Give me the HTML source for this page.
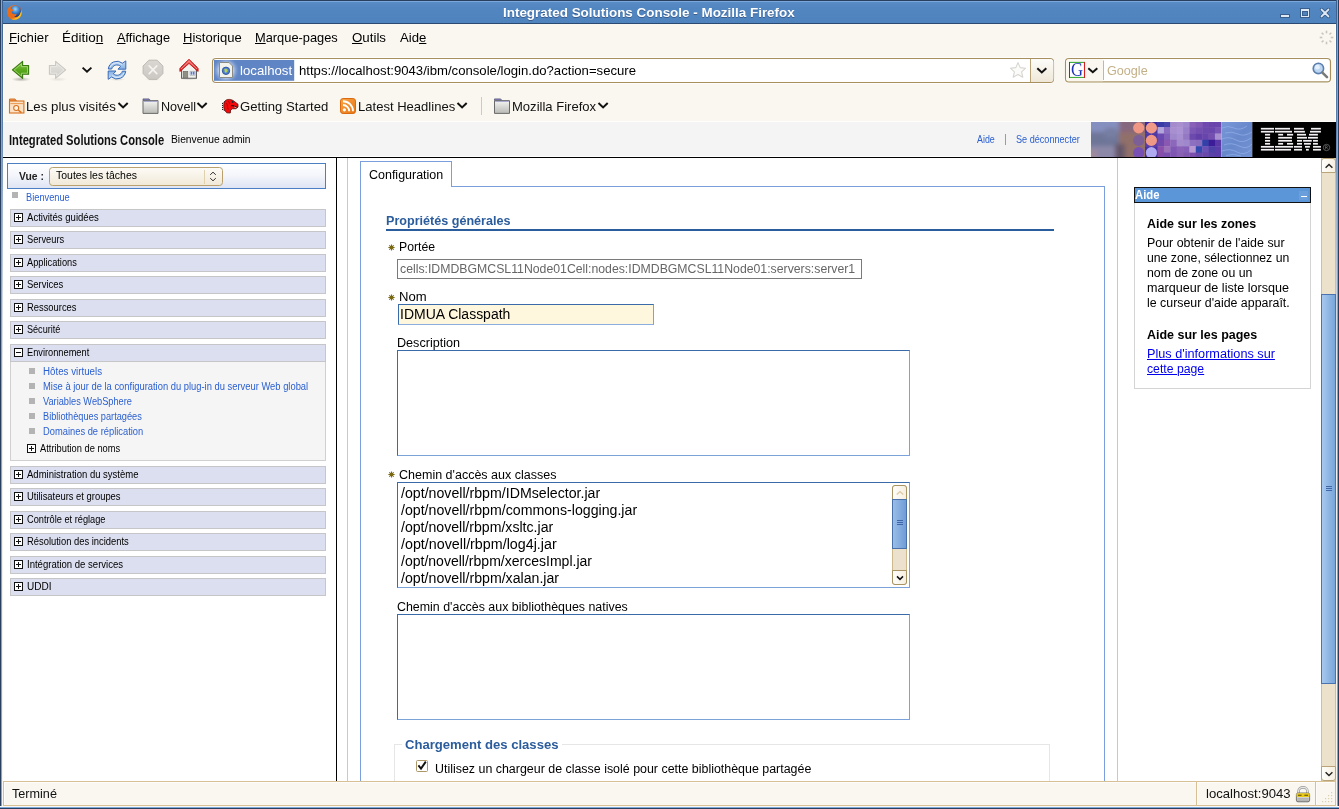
<!DOCTYPE html>
<html>
<head>
<meta charset="utf-8">
<title>Integrated Solutions Console - Mozilla Firefox</title>
<style>
*{box-sizing:border-box;margin:0;padding:0}
html,body{width:1339px;height:809px;overflow:hidden;background:#faf7f0;font-family:"Liberation Sans",sans-serif;}
.abs{position:absolute}
#win{position:absolute;left:0;top:0;width:1339px;height:809px;background:#faf7f0;overflow:hidden;will-change:transform}
.t{position:absolute;white-space:nowrap;line-height:1}
svg{position:absolute;overflow:visible}
/* title bar */
#title{position:absolute;left:0;top:0;width:1339px;height:24px;background:linear-gradient(to bottom,#2a4060 0,#2a4060 1px,#7aa8da 1px,#7aa8da 2px,#5a8cc6 2px,#5286c1 8px,#4f83be 23px,#2a4a72 23px,#2a4a72 24px)}
#title .txt{position:absolute;left:0;width:1299px;top:4px;text-align:center;color:#fff;font-weight:bold;font-size:13.5px;letter-spacing:0.45px;line-height:14px}
/* borders */
#bl{position:absolute;left:0;top:0;width:2px;height:809px;background:linear-gradient(to right,#2a4060 0,#2a4060 1px,#7aa8da 1px,#7aa8da 2px)}
#bl2{position:absolute;left:2px;top:0;width:1px;height:809px;background:linear-gradient(to bottom,#3a5f8c 0px,#4a70a0 60px,#5a7fae 125px,#9ab0cc 200px,#d0d8e4 300px,#f0eee8 400px,#faf7f0 809px)}
#hl{position:absolute;left:3px;top:24px;width:1px;height:98px;background:rgba(255,255,255,0.8)}
#br{position:absolute;left:1337px;top:0;width:2px;height:809px;background:linear-gradient(to left,#2a4060 0,#2a4060 1px,#7aa8da 1px,#7aa8da 2px)}
#br2{position:absolute;left:1336px;top:0;width:1px;height:809px;background:linear-gradient(to bottom,#3a5f8c 0px,#4a70a0 60px,#5a7fae 125px,#9ab0cc 200px,#d0d8e4 300px,#f0eee8 400px,#faf7f0 809px)}
#hr{position:absolute;left:1335px;top:24px;width:1px;height:98px;background:rgba(255,255,255,0.8)}
#bb{position:absolute;left:0;bottom:0;width:1339px;height:3px;background:linear-gradient(to top,#2a4060 0,#2a4060 1px,#7aa8da 1px,#7aa8da 2px,#fbf8f2 2px,#fbf8f2 3px)}
.menu{font-size:13px;color:#000;top:31px;letter-spacing:0.1px}
.menu u{text-decoration:underline;text-underline-offset:0.6px;text-decoration-thickness:1px}
.bm{font-size:13px;color:#111;top:100px;letter-spacing:0.2px}
.nav{font-size:10px;color:#000;left:27px;letter-spacing:0.1px}
.navbar{position:absolute;left:10px;width:316px;height:18px;background:#dcdfef;border:1px solid #c6c6c8}
.lnk{font-size:10px;color:#2a5fd0;left:43px;letter-spacing:0.1px}
.bul{position:absolute;width:6px;height:6px;background:#b4b4b4}
.lbl{font-size:12px;color:#000;letter-spacing:0.2px}
.ta{position:absolute;background:#fff;border:1px solid;border-color:#3b6aa8 #7ba3d9 #7ba3d9 #3b6aa8}
.cp{font-size:14px;color:#000;left:401px}
.hp{font-size:12px;color:#000;left:1147px;letter-spacing:0.15px}
</style>
</head>
<body>
<div id="win">
  <!-- TITLE BAR -->
  <div id="title"></div>
  <div class="t" style="left:503.13px;top:6px;font-size:13px;font-weight:bold;color:#fff;text-shadow:0 1px 0 rgba(40,60,100,0.55);letter-spacing:0;transform-origin:0 0;transform:scaleX(1.033)">Integrated Solutions Console - Mozilla Firefox</div>
  <!-- firefox icon -->
  <svg style="left:6.5px;top:4.8px" width="15" height="15" viewBox="0 0 15 15">
    <defs><radialGradient id="ffg" cx="0.5" cy="0.3" r="0.7"><stop offset="0" stop-color="#9fd8f6"/><stop offset="0.45" stop-color="#3f86d4"/><stop offset="1" stop-color="#142a6a"/></radialGradient>
    <linearGradient id="ffo" x1="0" y1="0" x2="1" y2="1"><stop offset="0" stop-color="#f0841c"/><stop offset="0.55" stop-color="#e2521a"/><stop offset="1" stop-color="#f8c822"/></linearGradient></defs>
    <circle cx="7.5" cy="7.5" r="7.3" fill="url(#ffo)"/>
    <circle cx="8.3" cy="6.4" r="5.7" fill="url(#ffg)"/>
    <path d="M0.3 6.8 C0.4 3.8 2 1.8 3.8 1.4 C3.2 2.6 3.4 3.4 4.4 4 C5.6 4.2 6.6 4.8 6.2 5.8 C5.2 6 4.4 6.8 4.8 7.8 C5.8 9.4 8 9.6 9.6 8.8 C9.4 11 7.4 12.4 5.2 12.2 C6.6 13.4 9.4 13.4 11.4 12 C9.4 14.8 5 15.2 2.4 12.8 C0.8 11.2 0.2 9 0.3 6.8 Z" fill="#ea6c18"/>
    <path d="M14.4 5.4 C15.2 8.4 14 12 11 13.8 C8.8 15 6 15 4 13.8 C7.4 14.2 10.8 12.8 12.6 9.8 C13.4 8.4 13.8 6.8 14.4 5.4 Z" fill="#f8c020"/>
  </svg>
  <!-- window controls -->
  <div class="abs" style="left:1280px;top:14px;width:10px;height:4px;background:#dfe8f5;border:1px solid #3a5f8c"></div>
  <div class="abs" style="left:1300px;top:8px;width:10px;height:10px;background:#dfe8f5;border:1px solid #3a5f8c"></div>
  <div class="abs" style="left:1302px;top:11px;width:6px;height:5px;background:#4f83be;border:1px solid #3a5f8c"></div>
  <svg style="left:1320px;top:8px" width="10" height="10" viewBox="0 0 10 10"><path d="M1.6 1.6 L8.4 8.4 M8.4 1.6 L1.6 8.4" stroke="#3a5f8c" stroke-width="3.6" fill="none" stroke-linecap="round"/><path d="M1.6 1.6 L8.4 8.4 M8.4 1.6 L1.6 8.4" stroke="#dfe8f5" stroke-width="1.9" fill="none" stroke-linecap="round"/></svg>
  <!-- throbber -->
  <svg style="left:1318.5px;top:29.5px" width="15" height="15" viewBox="-7.5 -7.5 15 15" fill="#c9c5bd">
    <rect x="-0.8" y="-6.8" width="1.6" height="2.6"/><rect x="-0.8" y="4.2" width="1.6" height="2.6"/>
    <rect x="-6.8" y="-0.8" width="2.6" height="1.6"/><rect x="4.2" y="-0.8" width="2.6" height="1.6"/>
    <rect x="-0.8" y="-6.8" width="1.6" height="2.6" transform="rotate(45)"/><rect x="-0.8" y="-6.8" width="1.6" height="2.6" transform="rotate(135)"/>
    <rect x="-0.8" y="-6.8" width="1.6" height="2.6" transform="rotate(225)"/><rect x="-0.8" y="-6.8" width="1.6" height="2.6" transform="rotate(315)"/>
  </svg>


  <!-- MENU BAR -->
  <div class="t menu" style="left:9.39px;letter-spacing:0;transform-origin:0 0;transform:scaleX(1.0146)"><u>F</u>ichier</div>
  <div class="t menu" style="left:62.37px;letter-spacing:0;transform-origin:0 0;transform:scaleX(1.0342)">Éditio<u>n</u></div>
  <div class="t menu" style="left:116.8px;letter-spacing:0;transform-origin:0 0;transform:scaleX(0.9832)"><u>A</u>ffichage</div>
  <div class="t menu" style="left:183.3px;letter-spacing:0;transform-origin:0 0;transform:scaleX(1.0018)"><u>H</u>istorique</div>
  <div class="t menu" style="left:255.11px;letter-spacing:0;transform-origin:0 0;transform:scaleX(0.9872)"><u>M</u>arque-pages</div>
  <div class="t menu" style="left:351.69px;letter-spacing:0;transform-origin:0 0;transform:scaleX(1.0233)"><u>O</u>utils</div>
  <div class="t menu" style="left:400px;letter-spacing:0;transform-origin:0 0;transform:scaleX(1.0118)">Aid<u>e</u></div>
  <!-- NAV TOOLBAR -->
  <svg style="left:0;top:52px" width="1339" height="38" viewBox="0 52 1339 38">
    <defs>
      <linearGradient id="gback" x1="0" y1="0" x2="0" y2="1"><stop offset="0" stop-color="#8fcb4c"/><stop offset="0.5" stop-color="#58a81c"/><stop offset="1" stop-color="#4a9614"/></linearGradient>
      <linearGradient id="gfwd" x1="0" y1="0" x2="0" y2="1"><stop offset="0" stop-color="#e6e4de"/><stop offset="1" stop-color="#d0cec8"/></linearGradient>
      <linearGradient id="ghome" x1="0" y1="0" x2="0" y2="1"><stop offset="0" stop-color="#f46a6a"/><stop offset="1" stop-color="#d01c1c"/></linearGradient>
      <radialGradient id="gshadow"><stop offset="0" stop-color="#000" stop-opacity="0.28"/><stop offset="1" stop-color="#000" stop-opacity="0"/></radialGradient>
      <linearGradient id="greload" x1="0" y1="0" x2="0" y2="1"><stop offset="0" stop-color="#c6dcf5"/><stop offset="1" stop-color="#86b0e2"/></linearGradient>
      <linearGradient id="gstop" x1="0" y1="0" x2="0" y2="1"><stop offset="0" stop-color="#dad7d2"/><stop offset="1" stop-color="#cbc7c2"/></linearGradient>
      <radialGradient id="gidglow"><stop offset="0" stop-color="#f4f8fe" stop-opacity="1"/><stop offset="0.5" stop-color="#d0def4" stop-opacity="0.9"/><stop offset="1" stop-color="#6085c4" stop-opacity="0"/></radialGradient>
      <clipPath id="cid"><rect x="214" y="60" width="80.2" height="20.8"/></clipPath>
      <linearGradient id="gdd" x1="0" y1="0" x2="0" y2="1"><stop offset="0" stop-color="#fdfcf9"/><stop offset="1" stop-color="#efe8d8"/></linearGradient>
    </defs>
    <!-- back -->
    <ellipse cx="21" cy="79.3" rx="9.5" ry="2.4" fill="url(#gshadow)"/>
    <path d="M12.4 69.9 L22.6 61.4 L22.6 65.5 L28.6 65.5 L28.6 74.3 L22.6 74.3 L22.6 78.4 Z" fill="url(#gback)" stroke="#3a7a10" stroke-width="1.1" stroke-linejoin="round"/>
    <path d="M14.2 69.9 L21.5 63.8 L21.5 66.6 L27.5 66.6 L27.5 73.2 L21.5 73.2 L21.5 76 Z" fill="none" stroke="#b4e088" stroke-width="0.8" stroke-linejoin="round" opacity="0.9"/>
    <!-- forward -->
    <ellipse cx="58" cy="79.3" rx="9.5" ry="2.2" fill="url(#gshadow)" opacity="0.3"/>
    <path d="M65.7 69.9 L55.6 61.4 L55.6 65.5 L49.4 65.5 L49.4 74.3 L55.6 74.3 L55.6 78.4 Z" fill="url(#gfwd)" stroke="#c9c8c2" stroke-width="1.1" stroke-linejoin="round"/>
    <path d="M64 69.9 L56.7 63.8 L56.7 66.6 L50.5 66.6 L50.5 73.2 L56.7 73.2 L56.7 76 Z" fill="none" stroke="#ecebe6" stroke-width="0.8" stroke-linejoin="round"/>
    <!-- dropdown chevron -->
    <path d="M82.6 67.6 L87 71.8 L91.4 67.6" fill="none" stroke="#111" stroke-width="1.9"/>
    <!-- reload -->
    <ellipse cx="117" cy="79.4" rx="8.5" ry="1.6" fill="url(#gshadow)" opacity="0.45"/>
    <g fill="url(#greload)" stroke="#3a6cb8" stroke-width="1" stroke-linejoin="round">
      <path id="rarrow" d="M108.3 69 A8.7 8.7 0 0 1 122.4 63.2 L125.8 60.9 L125.8 69.2 L118 69.2 L120.6 66.4 A5.4 5.4 0 0 0 111.7 69 Z"/>
      <use href="#rarrow" transform="rotate(180 117 70.1)"/>
    </g>
    <path d="M110 67.6 A7.4 7.4 0 0 1 121.8 64.6" fill="none" stroke="#e4f0fc" stroke-width="1" opacity="0.9"/>
    <path d="M124 72.6 A7.4 7.4 0 0 1 112.2 75.6" fill="none" stroke="#e4f0fc" stroke-width="1" opacity="0.9"/>
    <!-- stop -->
    <ellipse cx="153" cy="79.6" rx="8.5" ry="1.4" fill="url(#gshadow)" opacity="0.3"/>
    <path d="M148.9 60.2 L157.1 60.2 L162.9 66 L162.9 73.6 L157.1 79.4 L148.9 79.4 L143.1 73.6 L143.1 66 Z" fill="url(#gstop)" stroke="#bdb9b3" stroke-width="1"/>
    <path d="M149.2 65.9 L156.8 73.7 M156.8 65.9 L149.2 73.7" stroke="#f4f2ef" stroke-width="1.7" fill="none" stroke-linecap="round"/>
    <!-- home -->
    <ellipse cx="189" cy="79.2" rx="9" ry="1.3" fill="url(#gshadow)" opacity="0.4"/>
    <path d="M181.6 67 L189 60.6 L196.4 67 L196.4 78.3 L181.6 78.3 Z" fill="#f1f1ee" stroke="#5a5a58" stroke-width="1.1"/>
    <rect x="183.3" y="71.3" width="4.5" height="6.6" fill="#8f8f84" stroke="#6a6a64" stroke-width="0.6"/>
    <rect x="190" y="71.2" width="5" height="4.2" fill="#fff" stroke="#9a9a9a" stroke-width="0.5"/>
    <rect x="190.6" y="71.7" width="1.7" height="3" fill="#5a7ac8"/><rect x="192.8" y="71.7" width="1.7" height="3" fill="#5a7ac8"/>
    <path d="M179.9 68.4 L189 59.2 L198.1 68.4 L198.1 71.5 L189 63.4 L179.9 71.5 Z" fill="url(#ghome)" stroke="#cc1414" stroke-width="0.9" stroke-linejoin="round"/>
    <path d="M181 69 L189 61.2 L197 69" fill="none" stroke="#f59a9a" stroke-width="0.8"/>
    <!-- URL bar -->
    <rect x="211.6" y="57.6" width="842.8" height="25.8" rx="4.2" fill="none" stroke="#fff" stroke-width="1" opacity="0.8"/>
    <rect x="212.5" y="58.5" width="841" height="24" rx="3.5" fill="#fff" stroke="#a8905e" stroke-width="1.2"/>
    <path d="M1030.5 59 L1050 59 Q1053.5 59 1053.5 62.5 L1053.5 78.5 Q1053.5 82 1050 82 L1030.5 82 Z" fill="url(#gdd)"/>
    <path d="M1030.5 59 L1030.5 82" stroke="#b8a478" stroke-width="1"/>
    <rect x="214" y="60" width="80.2" height="20.8" fill="#6085c4"/>
    <ellipse cx="226" cy="70.4" rx="14" ry="14" fill="url(#gidglow)" clip-path="url(#cid)"/>
    <!-- page icon -->
    <path d="M219.5 62.5 L229 62.5 L232.5 66 L232.5 77.5 L219.5 77.5 Z" fill="#f3f3ee" stroke="#8a8a86" stroke-width="1"/>
    <circle cx="226" cy="70.8" r="3.7" fill="#4f7fd2" stroke="#2b4f9a" stroke-width="0.9"/>
    <path d="M224.2 69.2 C225.6 68.2 227.2 68.8 227.8 70.2 C227.6 71.8 226.2 73.2 225 72.6 C224.4 71.6 224.8 70.2 224.2 69.2 Z" fill="#b4d24a"/>
    <!-- star -->
    <path d="M1018 62.6 L1020.2 67.6 L1025.6 68.2 L1021.6 71.8 L1022.8 77.2 L1018 74.4 L1013.2 77.2 L1014.4 71.8 L1010.4 68.2 L1015.8 67.6 Z" fill="#fbfbfa" stroke="#d7d5d0" stroke-width="1.1" stroke-linejoin="round"/>
    <path d="M1037.3 68.2 L1041.8 72.4 L1046.3 68.2" fill="none" stroke="#111" stroke-width="2"/>
    <!-- Search bar -->
    <rect x="1064.6" y="57.6" width="266.8" height="25.2" rx="4.2" fill="none" stroke="#fff" stroke-width="1" opacity="0.8"/>
    <rect x="1065.5" y="58.5" width="265" height="23.4" rx="3.5" fill="#fff" stroke="#a8905e" stroke-width="1.2"/>
    <path d="M1103 59.2 L1069 59.2 Q1066.2 59.2 1066.2 62 L1066.2 78.4 Q1066.2 81.2 1069 81.2 L1103 81.2 Z" fill="#faf7f0"/>
    <rect x="1069.5" y="62.4" width="15" height="15" fill="#fff"/>
    <path d="M1069 62.4 L1085 62.4 M1069 77.4 L1085 77.4" stroke="#2aa62a" stroke-width="1"/>
    <path d="M1069.5 62 L1069.5 78" stroke="#2040d0" stroke-width="1"/><path d="M1084.5 62 L1084.5 78" stroke="#d42020" stroke-width="1.1"/>
    <path d="M1088.3 68.2 L1092.8 72.2 L1097.3 68.2" fill="none" stroke="#111" stroke-width="2"/>
    <path d="M1103.5 60.5 L1103.5 80" stroke="#c9b78e" stroke-width="1"/>
    <!-- magnifier -->
    <circle cx="1318.4" cy="68.4" r="5.2" fill="#bcd6f2" stroke="#5d7fae" stroke-width="1.6"/>
    <circle cx="1317.4" cy="67.2" r="2.4" fill="#e4f0fc"/>
    <path d="M1322.4 72.6 L1327 77.2" stroke="#7a7a7a" stroke-width="2.6" stroke-linecap="round"/>
  </svg>
  <div class="t" style="left:1070.6px;top:61.4px;font-family:'Liberation Serif',serif;font-size:18.5px;color:#1c34b4;line-height:19px;transform-origin:0 0;transform:scaleX(0.9)">G</div>
  <div class="t" style="left:239.94px;top:64px;font-size:13px;color:#fff;letter-spacing:0;transform-origin:0 0;transform:scaleX(1.0158)">localhost</div>
  <div class="t" style="left:298.69px;top:64px;font-size:13px;color:#000;letter-spacing:0;transform-origin:0 0;transform:scaleX(1.0105)">https://localhost:9043/ibm/console/login.do?action=secure</div>
  <div class="t" style="left:1107.27px;top:64px;font-size:13px;color:#c4b088;letter-spacing:0;transform-origin:0 0;transform:scaleX(0.9704)">Google</div>

  <!-- BOOKMARKS TOOLBAR -->
  <svg style="left:0;top:90px" width="1339" height="32" viewBox="0 90 1339 32">
    <defs>
      <linearGradient id="gfold" x1="0" y1="0" x2="0" y2="1"><stop offset="0" stop-color="#f4f4f2"/><stop offset="1" stop-color="#b9b9b6"/></linearGradient>
      <linearGradient id="grss" x1="0" y1="0" x2="1" y2="1"><stop offset="0" stop-color="#f9a548"/><stop offset="1" stop-color="#e87510"/></linearGradient>
      <g id="folder">
        <path d="M0.5 2.5 L0.5 0.9 L6.6 0.9 L8 2.5 Z" fill="#7f7fb8" stroke="#5c5c7c" stroke-width="0.8"/>
        <path d="M0.5 2.6 L15.5 2.6 L15.5 15.4 L0.5 15.4 Z" fill="url(#gfold)" stroke="#6b6b6b" stroke-width="1"/>
        <path d="M1.2 3.4 L14.8 3.4" stroke="#9a9ac8" stroke-width="0.9"/>
      </g>
      <path id="chev" d="M0 0 L4.6 4.4 L9.2 0" fill="none" stroke="#111" stroke-width="2"/>
    </defs>
    <!-- most visited folder (orange) -->
    <g transform="translate(9,98)">
      <path d="M0.5 3 L0.5 1 L6 1 L7.4 3 Z" fill="#f0a060" stroke="#d06818" stroke-width="0.9"/>
      <rect x="0.5" y="3" width="14.4" height="12" fill="#fbe2c6" stroke="#d9701c" stroke-width="1.1"/>
      <path d="M1.4 5.6 L14 5.6" stroke="#e89040" stroke-width="0.9"/>
      <circle cx="7.2" cy="10" r="2.5" fill="#fff6ea" stroke="#d9701c" stroke-width="1.1"/>
      <path d="M9.2 12 L12.4 14.6" stroke="#d9701c" stroke-width="1.5"/>
    </g>
    <use href="#chev" x="118.5" y="103"/>
    <use href="#folder" x="142.5" y="98"/>
    <use href="#chev" x="197.5" y="103"/>
    <!-- dino -->
    <g transform="translate(221,98)">
      <path d="M3.6 3.5 C5 1.2 9 0.7 12 2.5 L17 6.2 L17 9 L15.2 10.7 L11.4 10.8 L9.6 12 L9.3 15 L5.8 14.8 L3.4 12 C2.4 9 2.6 5.6 3.6 3.5 Z" fill="#f20a0a" stroke="#5a0808" stroke-width="0.8" stroke-linejoin="round"/>
      <circle cx="1.6" cy="5.4" r="0.6" fill="#111"/><circle cx="1.6" cy="7.4" r="0.6" fill="#111"/><circle cx="1.6" cy="9.4" r="0.6" fill="#111"/><circle cx="1.6" cy="11.4" r="0.6" fill="#111"/>
      <path d="M2.8 4.6 L3.6 3.4 M2.6 12 L3.6 12.4" stroke="#111" stroke-width="0.8"/>
      <circle cx="11.6" cy="4" r="0.9" fill="#1a2a30"/>
      <path d="M10 7.6 L12.4 7.8 L16.2 9.4" stroke="#3a0404" stroke-width="1.1" fill="none"/>
      <path d="M13.2 8.9 L15.6 10" stroke="#cfcfcf" stroke-width="0.8"/>
      <path d="M5.6 5 C6.6 7 6 9.6 7.4 11.6 M7.6 3 C8.4 4 8 5 8.8 5.8" stroke="#a00606" stroke-width="0.8" fill="none"/>
    </g>
    <!-- rss -->
    <g transform="translate(340,98)">
      <rect x="0.5" y="0.5" width="15" height="15" rx="2.6" fill="url(#grss)" stroke="#d96a10" stroke-width="1"/>
      <circle cx="4.4" cy="11.8" r="1.6" fill="#fff"/>
      <path d="M3 7 A6.2 6.2 0 0 1 9.2 13.2" fill="none" stroke="#fff" stroke-width="1.9"/>
      <path d="M3 3.2 A10 10 0 0 1 13 13.2" fill="none" stroke="#fff" stroke-width="1.9"/>
    </g>
    <use href="#chev" x="457.5" y="103"/>
    <path d="M481.5 97 L481.5 115" stroke="#d9c9a4" stroke-width="1"/>
    <use href="#folder" x="494" y="98"/>
    <use href="#chev" x="598.5" y="103"/>
  </svg>
  <div class="t bm" style="left:26.08px;letter-spacing:0;transform-origin:0 0;transform:scaleX(1.019)">Les plus visités</div>
  <div class="t bm" style="left:160.53px;letter-spacing:0;transform-origin:0 0;transform:scaleX(0.9693)">Novell</div>
  <div class="t bm" style="left:239.94px;letter-spacing:0;transform-origin:0 0;transform:scaleX(1.0099)">Getting Started</div>
  <div class="t bm" style="left:357.6px;letter-spacing:0;transform-origin:0 0;transform:scaleX(1.0037)">Latest Headlines</div>
  <div class="t bm" style="left:511.5px;letter-spacing:0;transform-origin:0 0;transform:scaleX(1.0036)">Mozilla Firefox</div>

  <!-- PAGE -->
  <div class="abs" style="left:3px;top:122px;width:1333px;height:659px;background:#fff"></div>
  <!-- banner -->
  <div class="abs" style="left:3px;top:122px;width:1333px;height:34px;background:#f4f4f4"></div>
  <div class="abs" style="left:3px;top:157px;width:1333px;height:1.2px;background:#000"></div>
  <div class="t" style="left:9.1px;top:133.3px;font-size:14px;font-weight:bold;color:#111;letter-spacing:0;transform-origin:0 0;transform:scaleX(0.7979)">Integrated Solutions Console</div>
  <div class="t" style="left:170.73px;top:135.4px;font-size:10px;color:#000;letter-spacing:0;transform-origin:0 0;transform:scaleX(1.0284)">Bienvenue admin</div>
  <div class="t" style="left:976.8px;top:134.5px;font-size:10px;color:#2a5fd0;letter-spacing:0;transform-origin:0 0;transform:scaleX(0.8872)">Aide</div>
  <div class="abs" style="left:1005px;top:134px;width:1px;height:11px;background:#7d9fe0"></div>
  <div class="t" style="left:1016.24px;top:134.5px;font-size:10px;color:#2a5fd0;letter-spacing:0;transform-origin:0 0;transform:scaleX(0.9108)">Se déconnecter</div>
  <!-- banner art -->
  <svg style="left:1091px;top:122px;overflow:hidden" width="245" height="35" viewBox="0 0 245 35">
    <defs>
      <filter id="bl1" x="-10%" y="-10%" width="120%" height="120%"><feGaussianBlur stdDeviation="2.2"/></filter>
      <filter id="bl2" x="-5%" y="-5%" width="110%" height="110%"><feGaussianBlur stdDeviation="0.7"/></filter>
      <linearGradient id="ba3" x1="0" y1="0" x2="1" y2="1"><stop offset="0" stop-color="#7898d8"/><stop offset="0.5" stop-color="#6888cc"/><stop offset="1" stop-color="#7494d4"/></linearGradient>
      <clipPath id="cA"><rect x="0" y="0" width="54" height="35"/></clipPath>
      <clipPath id="cM"><rect x="54" y="0" width="76.5" height="35"/></clipPath>
    </defs>
    <g clip-path="url(#cA)"><g filter="url(#bl1)">
      <rect x="-6" y="-6" width="36" height="16" fill="#8690c0"/>
      <rect x="-6" y="10" width="36" height="14" fill="#6e7698"/>
      <rect x="-6" y="24" width="36" height="17" fill="#8c88a8"/>
      <rect x="-6" y="28" width="12" height="12" fill="#a08a9c"/>
      <rect x="28" y="-6" width="32" height="16" fill="#86687e"/>
      <rect x="28" y="10" width="32" height="31" fill="#92706a"/>
      <rect x="24" y="22" width="10" height="18" fill="#66586a"/>
      <rect x="14" y="6" width="12" height="10" fill="#767ea2"/>
    </g></g>
    <g clip-path="url(#cM)"><g filter="url(#bl2)"><rect x="53.80" y="-0.20" width="6.78" height="5.70" fill="#3c2c9c"/><rect x="60.17" y="-0.20" width="6.78" height="5.70" fill="#3c2c9c"/><rect x="66.55" y="-0.20" width="6.78" height="5.70" fill="#3a3aa8"/><rect x="72.92" y="-0.20" width="6.78" height="5.70" fill="#4444ac"/><rect x="79.30" y="-0.20" width="6.78" height="5.70" fill="#a48ccc"/><rect x="85.67" y="-0.20" width="6.78" height="5.70" fill="#a890d0"/><rect x="92.05" y="-0.20" width="6.78" height="5.70" fill="#a088cc"/><rect x="98.42" y="-0.20" width="6.78" height="5.70" fill="#8860b8"/><rect x="104.80" y="-0.20" width="6.78" height="5.70" fill="#8058b4"/><rect x="111.17" y="-0.20" width="6.78" height="5.70" fill="#7048b0"/><rect x="117.55" y="-0.20" width="6.78" height="5.70" fill="#6a44ac"/><rect x="123.92" y="-0.20" width="6.78" height="5.70" fill="#6a44ac"/><rect x="53.80" y="5.10" width="6.78" height="6.80" fill="#4a34a0"/><rect x="60.17" y="5.10" width="6.78" height="6.80" fill="#4a34a0"/><rect x="66.55" y="5.10" width="6.78" height="6.80" fill="#b4a4dc"/><rect x="72.92" y="5.10" width="6.78" height="6.80" fill="#8a6cc0"/><rect x="79.30" y="5.10" width="6.78" height="6.80" fill="#a890d0"/><rect x="85.67" y="5.10" width="6.78" height="6.80" fill="#ac94d4"/><rect x="92.05" y="5.10" width="6.78" height="6.80" fill="#9a80c8"/><rect x="98.42" y="5.10" width="6.78" height="6.80" fill="#7c58b4"/><rect x="104.80" y="5.10" width="6.78" height="6.80" fill="#7450b0"/><rect x="111.17" y="5.10" width="6.78" height="6.80" fill="#6c48ac"/><rect x="117.55" y="5.10" width="6.78" height="6.80" fill="#6a46ac"/><rect x="123.92" y="5.10" width="6.78" height="6.80" fill="#7854b4"/><rect x="53.80" y="11.50" width="6.78" height="6.70" fill="#5038a4"/><rect x="60.17" y="11.50" width="6.78" height="6.70" fill="#5038a4"/><rect x="66.55" y="11.50" width="6.78" height="6.70" fill="#6a48b0"/><rect x="72.92" y="11.50" width="6.78" height="6.70" fill="#8060b8"/><rect x="79.30" y="11.50" width="6.78" height="6.70" fill="#a088cc"/><rect x="85.67" y="11.50" width="6.78" height="6.70" fill="#a890d0"/><rect x="92.05" y="11.50" width="6.78" height="6.70" fill="#9478c4"/><rect x="98.42" y="11.50" width="6.78" height="6.70" fill="#6c48ac"/><rect x="104.80" y="11.50" width="6.78" height="6.70" fill="#6440a8"/><rect x="111.17" y="11.50" width="6.78" height="6.70" fill="#6844ac"/><rect x="117.55" y="11.50" width="6.78" height="6.70" fill="#7450b0"/><rect x="123.92" y="11.50" width="6.78" height="6.70" fill="#a890d0"/><rect x="53.80" y="17.80" width="6.78" height="6.80" fill="#5a3ca8"/><rect x="60.17" y="17.80" width="6.78" height="6.80" fill="#5a3ca8"/><rect x="66.55" y="17.80" width="6.78" height="6.80" fill="#7048ac"/><rect x="72.92" y="17.80" width="6.78" height="6.80" fill="#8a58b0"/><rect x="79.30" y="17.80" width="6.78" height="6.80" fill="#8c68bc"/><rect x="85.67" y="17.80" width="6.78" height="6.80" fill="#a48ccc"/><rect x="92.05" y="17.80" width="6.78" height="6.80" fill="#a088cc"/><rect x="98.42" y="17.80" width="6.78" height="6.80" fill="#8e70c0"/><rect x="104.80" y="17.80" width="6.78" height="6.80" fill="#8a6cbc"/><rect x="111.17" y="17.80" width="6.78" height="6.80" fill="#3040a8"/><rect x="117.55" y="17.80" width="6.78" height="6.80" fill="#3c1c98"/><rect x="123.92" y="17.80" width="6.78" height="6.80" fill="#5a38a8"/><rect x="53.80" y="24.20" width="6.78" height="6.80" fill="#4a30a0"/><rect x="60.17" y="24.20" width="6.78" height="6.80" fill="#4a30a0"/><rect x="66.55" y="24.20" width="6.78" height="6.80" fill="#8a50a8"/><rect x="72.92" y="24.20" width="6.78" height="6.80" fill="#9a70b8"/><rect x="79.30" y="24.20" width="6.78" height="6.80" fill="#8058b4"/><rect x="85.67" y="24.20" width="6.78" height="6.80" fill="#8a64b8"/><rect x="92.05" y="24.20" width="6.78" height="6.80" fill="#8660b8"/><rect x="98.42" y="24.20" width="6.78" height="6.80" fill="#b898d0"/><rect x="104.80" y="24.20" width="6.78" height="6.80" fill="#3048b0"/><rect x="111.17" y="24.20" width="6.78" height="6.80" fill="#6a50b4"/><rect x="117.55" y="24.20" width="6.78" height="6.80" fill="#5040a8"/><rect x="123.92" y="24.20" width="6.78" height="6.80" fill="#5a3ca8"/><rect x="53.80" y="30.60" width="6.78" height="4.60" fill="#4a30a0"/><rect x="60.17" y="30.60" width="6.78" height="4.60" fill="#4a30a0"/><rect x="66.55" y="30.60" width="6.78" height="4.60" fill="#8450a8"/><rect x="72.92" y="30.60" width="6.78" height="4.60" fill="#7a50b0"/><rect x="79.30" y="30.60" width="6.78" height="4.60" fill="#7e56b2"/><rect x="85.67" y="30.60" width="6.78" height="4.60" fill="#8a60b4"/><rect x="92.05" y="30.60" width="6.78" height="4.60" fill="#8058b0"/><rect x="98.42" y="30.60" width="6.78" height="4.60" fill="#7a50ae"/><rect x="104.80" y="30.60" width="6.78" height="4.60" fill="#6a48ac"/><rect x="111.17" y="30.60" width="6.78" height="4.60" fill="#6648aa"/><rect x="117.55" y="30.60" width="6.78" height="4.60" fill="#5a40a8"/><rect x="123.92" y="30.60" width="6.78" height="4.60" fill="#5a3ca8"/></g></g>
    <circle cx="47.7" cy="5.9" r="5.6" fill="#f09684"/><circle cx="60.4" cy="5.9" r="5.6" fill="#f29a88"/>
    <circle cx="47.7" cy="18.4" r="5.6" fill="#7d5f98"/><circle cx="60.4" cy="18.4" r="5.6" fill="#f09886"/>
    <circle cx="47.7" cy="30.7" r="5.6" fill="#7850b4"/><circle cx="60.4" cy="30.7" r="5.6" fill="#b0aaf0"/>
    <rect x="130.5" y="0" width="31" height="35" fill="url(#ba3)"/>
    <g stroke="#93b2e8" stroke-width="0.9" fill="none" opacity="0.75">
      <path d="M131 6 Q137 3 143 6 T156 4 M134 11 Q141 9 147 12 T161 10 M131 17 Q138 14 145 18 T160 16 M133 23 Q140 20 148 24 T161 22 M131 29 Q139 26 146 30 T160 28 M135 33.5 Q142 31 150 34"/>
    </g>
    <rect x="161.3" y="0" width="83.7" height="35" fill="#000"/>
    <!-- IBM 8-bar logo -->
    <g fill="#f4f0f4"><rect x="169.9" y="5.85" width="13.1" height="1.7"/><rect x="184.0" y="5.85" width="15.0" height="1.7"/><rect x="203.0" y="5.85" width="9.9" height="1.7"/><rect x="220.0" y="5.85" width="9.9" height="1.7"/><rect x="169.9" y="8.85" width="13.1" height="1.7"/><rect x="184.0" y="8.85" width="17.0" height="1.7"/><rect x="203.0" y="8.85" width="10.9" height="1.7"/><rect x="219.0" y="8.85" width="10.9" height="1.7"/><rect x="174.0" y="11.85" width="5.1" height="1.7"/><rect x="187.2" y="11.85" width="4.9" height="1.7"/><rect x="196.0" y="11.85" width="6.1" height="1.7"/><rect x="206.0" y="11.85" width="9.0" height="1.7"/><rect x="218.0" y="11.85" width="8.9" height="1.7"/><rect x="174.0" y="14.90" width="5.1" height="1.7"/><rect x="187.2" y="14.90" width="13.8" height="1.7"/><rect x="206.0" y="14.90" width="10.0" height="1.7"/><rect x="217.0" y="14.90" width="9.9" height="1.7"/><rect x="174.0" y="17.95" width="5.1" height="1.7"/><rect x="187.2" y="17.95" width="13.8" height="1.7"/><rect x="206.0" y="17.95" width="5.0" height="1.7"/><rect x="212.1" y="17.95" width="8.7" height="1.7"/><rect x="222.0" y="17.95" width="4.9" height="1.7"/><rect x="174.0" y="20.95" width="5.1" height="1.7"/><rect x="187.2" y="20.95" width="4.9" height="1.7"/><rect x="196.0" y="20.95" width="6.1" height="1.7"/><rect x="206.0" y="20.95" width="5.0" height="1.7"/><rect x="213.0" y="20.95" width="6.9" height="1.7"/><rect x="222.0" y="20.95" width="4.9" height="1.7"/><rect x="169.9" y="23.95" width="13.1" height="1.7"/><rect x="184.0" y="23.95" width="18.1" height="1.7"/><rect x="203.0" y="23.95" width="8.0" height="1.7"/><rect x="214.0" y="23.95" width="4.9" height="1.7"/><rect x="222.0" y="23.95" width="7.9" height="1.7"/><rect x="169.9" y="26.90" width="13.1" height="1.7"/><rect x="184.0" y="26.90" width="16.0" height="1.7"/><rect x="203.0" y="26.90" width="8.0" height="1.7"/><rect x="215.0" y="26.90" width="2.8" height="1.7"/><rect x="222.0" y="26.90" width="7.9" height="1.7"/></g>
    <circle cx="235.5" cy="25.5" r="3.2" fill="none" stroke="#8a8a8a" stroke-width="0.6"/><path d="M234.4 27.3 L234.4 23.7 L236 23.7 Q236.9 24.6 236 25.5 L234.4 25.5 M235.6 25.5 L236.8 27.3" stroke="#8a8a8a" stroke-width="0.5" fill="none"/>
  </svg>
  <!-- NAV TREE -->
  <div class="abs" style="left:336px;top:158px;width:1.2px;height:623px;background:#000"></div>
  <div class="abs" style="left:7px;top:163px;width:319px;height:26px;border:1px solid #4a7fc4;background:linear-gradient(to bottom,#fff 0%,#f3f5fb 50%,#dfe5f4 100%)"></div>
  <div class="t" style="left:18.7px;top:171px;font-size:10.5px;font-weight:bold;color:#222;letter-spacing:0;transform-origin:0 0;transform:scaleX(0.9856)">Vue :</div>
  <div class="abs" style="left:49px;top:167px;width:174px;height:19px;border:1px solid #b9a06c;border-radius:3.5px;background:linear-gradient(to bottom,#fdfbf6,#f1e9d8)"></div>
  <div class="abs" style="left:204px;top:170px;width:1px;height:14px;background:#e0d2ae"></div>
  <svg style="left:208.5px;top:170px" width="8" height="13" viewBox="0 0 8 13"><path d="M1.2 4.8 L4 2.2 L6.8 4.8 M1.2 8.2 L4 10.8 L6.8 8.2" stroke="#333" stroke-width="1" fill="none"/></svg>
  <div class="t" style="left:55.74px;top:171px;font-size:10px;color:#000;letter-spacing:0;transform-origin:0 0;transform:scaleX(1.0476)">Toutes les tâches</div>
  <div class="bul" style="left:12px;top:192px"></div>
  <div class="t lnk" style="left:25.91px;top:192.5px;letter-spacing:0;transform-origin:0 0;transform:scaleX(0.9261)">Bienvenue</div>
  <svg width="0" height="0"><defs>
    <g id="plus"><rect x="0.5" y="0.5" width="8" height="8" fill="#fff" stroke="#111" stroke-width="1"/><path d="M2 4.5 L7 4.5 M4.5 2 L4.5 7" stroke="#111" stroke-width="1"/></g>
    <g id="minus"><rect x="0.5" y="0.5" width="8" height="8" fill="#fff" stroke="#111" stroke-width="1"/><path d="M2 4.5 L7 4.5" stroke="#111" stroke-width="1"/></g>
  </defs></svg>
  <div class="navbar" style="top:209px"></div><svg style="left:14px;top:213px" width="9" height="9"><use href="#plus"/></svg><div class="t nav" style="left:26.8px;top:212.5px;letter-spacing:0;transform-origin:0 0;transform:scaleX(0.9565)">Activités guidées</div>
  <div class="navbar" style="top:231px"></div><svg style="left:14px;top:235px" width="9" height="9"><use href="#plus"/></svg><div class="t nav" style="left:27.24px;top:234.5px;letter-spacing:0;transform-origin:0 0;transform:scaleX(0.9274)">Serveurs</div>
  <div class="navbar" style="top:254px"></div><svg style="left:14px;top:258px" width="9" height="9"><use href="#plus"/></svg><div class="t nav" style="left:26.8px;top:257.5px;letter-spacing:0;transform-origin:0 0;transform:scaleX(0.9234)">Applications</div>
  <div class="navbar" style="top:276px"></div><svg style="left:14px;top:280px" width="9" height="9"><use href="#plus"/></svg><div class="t nav" style="left:27.23px;top:279.5px;letter-spacing:0;transform-origin:0 0;transform:scaleX(0.9467)">Services</div>
  <div class="navbar" style="top:299px"></div><svg style="left:14px;top:303px" width="9" height="9"><use href="#plus"/></svg><div class="t nav" style="left:27px;top:302.5px;letter-spacing:0;transform-origin:0 0;transform:scaleX(0.9372)">Ressources</div>
  <div class="navbar" style="top:321px"></div><svg style="left:14px;top:325px" width="9" height="9"><use href="#plus"/></svg><div class="t nav" style="left:27.25px;top:324.5px;letter-spacing:0;transform-origin:0 0;transform:scaleX(0.9091)">Sécurité</div>
  <div class="abs" style="left:10px;top:361px;width:316px;height:100px;background:#f5f5f5;border:1px solid #d0d0d0"></div>
  <div class="navbar" style="top:344px"></div><svg style="left:14px;top:348px" width="9" height="9"><use href="#minus"/></svg><div class="t nav" style="left:27.01px;top:347.5px;letter-spacing:0;transform-origin:0 0;transform:scaleX(0.9248)">Environnement</div>
  <div class="bul" style="left:29px;top:367.5px"></div><div class="t lnk" style="left:42.57px;top:367px;letter-spacing:0;transform-origin:0 0;transform:scaleX(0.9748)">Hôtes virtuels</div>
  <div class="bul" style="left:29px;top:382.5px"></div><div class="t lnk" style="left:42.6px;top:382px;letter-spacing:0;transform-origin:0 0;transform:scaleX(0.9378)">Mise à jour de la configuration du plug-in du serveur Web global</div>
  <div class="bul" style="left:29px;top:397.5px"></div><div class="t lnk" style="left:42.57px;top:397px;letter-spacing:0;transform-origin:0 0;transform:scaleX(0.9232)">Variables WebSphere</div>
  <div class="bul" style="left:29px;top:412.5px"></div><div class="t lnk" style="left:42.61px;top:412px;letter-spacing:0;transform-origin:0 0;transform:scaleX(0.9205)">Bibliothèques partagées</div>
  <div class="bul" style="left:29px;top:427.5px"></div><div class="t lnk" style="left:42.6px;top:427px;letter-spacing:0;transform-origin:0 0;transform:scaleX(0.934)">Domaines de réplication</div>
  <svg style="left:27px;top:444px" width="9" height="9"><use href="#plus"/></svg><div class="t nav" style="left:40.2px;top:444px;letter-spacing:0;transform-origin:0 0;transform:scaleX(0.9306)">Attribution de noms</div>
  <div class="navbar" style="top:466px"></div><svg style="left:14px;top:470px" width="9" height="9"><use href="#plus"/></svg><div class="t nav" style="left:27.2px;top:469.5px;letter-spacing:0;transform-origin:0 0;transform:scaleX(0.9507)">Administration du système</div>
  <div class="navbar" style="top:488px"></div><svg style="left:14px;top:492px" width="9" height="9"><use href="#plus"/></svg><div class="t nav" style="left:26.89px;top:491.5px;letter-spacing:0;transform-origin:0 0;transform:scaleX(0.9401)">Utilisateurs et groupes</div>
  <div class="navbar" style="top:511px"></div><svg style="left:14px;top:515px" width="9" height="9"><use href="#plus"/></svg><div class="t nav" style="left:27.14px;top:514.5px;letter-spacing:0;transform-origin:0 0;transform:scaleX(0.9223)">Contrôle et réglage</div>
  <div class="navbar" style="top:533px"></div><svg style="left:14px;top:537px" width="9" height="9"><use href="#plus"/></svg><div class="t nav" style="left:26.9px;top:536.5px;letter-spacing:0;transform-origin:0 0;transform:scaleX(0.9389)">Résolution des incidents</div>
  <div class="navbar" style="top:556px"></div><svg style="left:14px;top:560px" width="9" height="9"><use href="#plus"/></svg><div class="t nav" style="left:26.64px;top:559.5px;letter-spacing:0;transform-origin:0 0;transform:scaleX(0.9552)">Intégration de services</div>
  <div class="navbar" style="top:578px"></div><svg style="left:14px;top:582px" width="9" height="9"><use href="#plus"/></svg><div class="t nav" style="left:26.85px;top:581.5px;letter-spacing:0;transform-origin:0 0;transform:scaleX(1.0022)">UDDI</div>
  <!-- MAIN CONTENT -->
  <div class="abs" style="left:347px;top:158px;width:1px;height:623px;background:#c9c9c9"></div>
  <div class="abs" style="left:1117px;top:158px;width:1px;height:623px;background:#c9c9c9"></div>
  <!-- tab + content frame -->
  <div class="abs" style="left:360px;top:186px;width:745px;height:600px;border:1px solid #7b9fdc;border-bottom:none"></div>
  <div class="abs" style="left:360px;top:161px;width:92px;height:25px;border:1px solid #7b9fdc;border-bottom:none;background:#fff"></div>
  <div class="abs" style="left:361px;top:186px;width:90px;height:1px;background:#fff"></div>
  <div class="t" style="left:369.08px;top:168.5px;font-size:12px;color:#000;letter-spacing:0;transform-origin:0 0;transform:scaleX(1.04)">Configuration</div>
  <div class="t" style="left:385.95px;top:214.5px;font-size:12.5px;font-weight:bold;color:#2b5c9c;letter-spacing:0;transform-origin:0 0;transform:scaleX(1.0065)">Propriétés générales</div>
  <div class="abs" style="left:386px;top:229px;width:668px;height:2px;background:#2b5c9c"></div>
  <svg width="0" height="0"><defs><g id="req" stroke="#7a6810" stroke-width="1.1"><path d="M3.5 0.4 L3.5 6.6 M0.4 3.5 L6.6 3.5 M1.3 1.3 L5.7 5.7 M5.7 1.3 L1.3 5.7"/></g></defs></svg>
  <svg style="left:388px;top:243.5px" width="7" height="7"><use href="#req"/></svg>
  <div class="t lbl" style="left:398.78px;top:241px;letter-spacing:0;transform-origin:0 0;transform:scaleX(1.0193)">Portée</div>
  <div class="abs" style="left:397px;top:259px;width:465px;height:20px;border:1px solid #7a7a7a;background:#fff"></div>
  <div class="t" style="left:400.19px;top:262.5px;font-size:12px;color:#666;letter-spacing:0;transform-origin:0 0;transform:scaleX(1.0227)">cells:IDMDBGMCSL11Node01Cell:nodes:IDMDBGMCSL11Node01:servers:server1</div>
  <svg style="left:388px;top:293.5px" width="7" height="7"><use href="#req"/></svg>
  <div class="t lbl" style="left:398.51px;top:291px;letter-spacing:0;transform-origin:0 0;transform:scaleX(1.0894)">Nom</div>
  <div class="abs" style="left:398px;top:304px;width:256px;height:21px;border:1px solid;border-color:#3b6aa8 #7ba3d9 #8aaede #3b6aa8;background:#fff6de"></div>
  <div class="t" style="left:400.05px;top:307px;font-size:14px;color:#000;letter-spacing:0;transform-origin:0 0;transform:scaleX(0.9986)">IDMUA Classpath</div>
  <div class="t lbl" style="left:396.95px;top:336.5px;letter-spacing:0;transform-origin:0 0;transform:scaleX(1.0506)">Description</div>
  <div class="ta" style="left:397px;top:350px;width:513px;height:106px"></div>
  <svg style="left:388px;top:471px" width="7" height="7"><use href="#req"/></svg>
  <div class="t lbl" style="left:399.08px;top:468.5px;letter-spacing:0;transform-origin:0 0;transform:scaleX(1.0427)">Chemin d'accès aux classes</div>
  <div class="ta" style="left:397px;top:482px;width:513px;height:106px"></div>
  <div class="t cp" style="left:400.7px;top:486px;letter-spacing:0;transform-origin:0 0;transform:scaleX(1.0119)">/opt/novell/rbpm/IDMselector.jar</div>
  <div class="t cp" style="left:400.7px;top:503px;letter-spacing:0;transform-origin:0 0;transform:scaleX(1.0114)">/opt/novell/rbpm/commons-logging.jar</div>
  <div class="t cp" style="left:400.7px;top:520px;letter-spacing:0;transform-origin:0 0;transform:scaleX(1.0083)">/opt/novell/rbpm/xsltc.jar</div>
  <div class="t cp" style="left:400.7px;top:537px;letter-spacing:0;transform-origin:0 0;transform:scaleX(1.0207)">/opt/novell/rbpm/log4j.jar</div>
  <div class="t cp" style="left:400.7px;top:554px;letter-spacing:0;transform-origin:0 0;transform:scaleX(1.0021)">/opt/novell/rbpm/xercesImpl.jar</div>
  <div class="t cp" style="left:400.7px;top:571px;letter-spacing:0;transform-origin:0 0;transform:scaleX(1.0106)">/opt/novell/rbpm/xalan.jar</div>
  <!-- textarea scrollbar -->
  <div class="abs" style="left:892px;top:485px;width:15px;height:100px;background:#ebe1cc;border:1px solid #cdb98c;border-radius:3px"></div>
  <div class="abs" style="left:892px;top:485px;width:15px;height:15px;background:linear-gradient(to right,#fffefc,#f6efe0);border:1px solid #a89462;border-radius:3px 3px 0 0"></div>
  <svg style="left:895.5px;top:489.5px" width="8" height="6" viewBox="0 0 8 6"><path d="M0.8 4.6 L4 1.6 L7.2 4.6" stroke="#dccba4" stroke-width="1.4" fill="none"/></svg>
  <div class="abs" style="left:892px;top:499px;width:15px;height:50px;background:linear-gradient(to right,#9abde8,#6f9dd8);border:1px solid #4a70a8"></div>
  <div class="abs" style="left:896.5px;top:520px;width:6px;height:1px;background:#3f66a8;box-shadow:0 2px 0 #3f66a8,0 4px 0 #3f66a8"></div>
  <div class="abs" style="left:892px;top:570px;width:15px;height:15px;background:linear-gradient(to right,#fffefc,#f6efe0);border:1px solid #a89462;border-radius:0 0 3px 3px"></div>
  <svg style="left:895.5px;top:575px" width="8" height="6" viewBox="0 0 8 6"><path d="M1 1.4 L4 4.4 L7 1.4" stroke="#111" stroke-width="1.5" fill="none"/></svg>
  <div class="t lbl" style="left:396.78px;top:600.5px;letter-spacing:0;transform-origin:0 0;transform:scaleX(1.0344)">Chemin d'accès aux bibliothèques natives</div>
  <div class="ta" style="left:397px;top:614px;width:513px;height:106px"></div>
  <!-- fieldset -->
  <div class="abs" style="left:394px;top:744px;width:656px;height:50px;border:1px solid #e6e6e6;border-bottom:none"></div>
  <div class="abs" style="left:402px;top:738px;width:160px;height:14px;background:#fff"></div>
  <div class="t" style="left:405.25px;top:739.2px;font-size:12px;font-weight:bold;color:#2b5c9c;letter-spacing:0;transform-origin:0 0;transform:scaleX(1.0905)">Chargement des classes</div>
  <div class="abs" style="left:416px;top:760px;width:12px;height:12px;border:1px solid #ac9768;border-radius:1.5px;background:#fff"></div>
  <svg style="left:416px;top:759px" width="14" height="14" viewBox="0 0 14 14"><path d="M2.4 6.4 L5 9.6 L9.8 2.6" stroke="#111" stroke-width="1.9" fill="none"/></svg>
  <div class="t lbl" style="left:434.76px;top:763px;letter-spacing:0;transform-origin:0 0;transform:scaleX(1.0351)">Utilisez un chargeur de classe isolé pour cette bibliothèque partagée</div>
  <!-- AIDE portlet -->
  <div class="abs" style="left:1134px;top:187px;width:177px;height:201.5px;border:1px solid #d4d4d4;background:#fff"></div>
  <div class="abs" style="left:1134px;top:187px;width:177px;height:16px;border:1px solid #111;background:#5b96d9"></div>
  <div class="t" style="left:1134.96px;top:189px;font-size:12px;font-weight:bold;color:#fff;letter-spacing:0;transform-origin:0 0;transform:scaleX(0.9426)">Aide</div>
  <div class="abs" style="left:1299px;top:190.5px;width:9px;height:9px;background:#6a9fdc"></div>
  <div class="abs" style="left:1300.5px;top:195.5px;width:6px;height:1.6px;background:#fff"></div>
  <div class="t" style="left:1147.34px;top:218px;font-size:12px;font-weight:bold;color:#000;letter-spacing:0;transform-origin:0 0;transform:scaleX(1.0358)">Aide sur les zones</div>
  <div class="t hp" style="left:1146.57px;top:237.3px;letter-spacing:0;transform-origin:0 0;transform:scaleX(1.0345)">Pour obtenir de l'aide sur</div>
  <div class="t hp" style="left:1146.83px;top:252.3px;letter-spacing:0;transform-origin:0 0;transform:scaleX(1.0203)">une zone, sélectionnez un</div>
  <div class="t hp" style="left:1146.83px;top:267.3px;letter-spacing:0;transform-origin:0 0;transform:scaleX(1.0262)">nom de zone ou un</div>
  <div class="t hp" style="left:1146.81px;top:282.3px;letter-spacing:0;transform-origin:0 0;transform:scaleX(1.0488)">marqueur de liste lorsque</div>
  <div class="t hp" style="left:1146.83px;top:297.3px;letter-spacing:0;transform-origin:0 0;transform:scaleX(1.0315)">le curseur d'aide apparaît.</div>
  <div class="t" style="left:1147.34px;top:329px;font-size:12px;font-weight:bold;color:#000;letter-spacing:0;transform-origin:0 0;transform:scaleX(1.0394)">Aide sur les pages</div>
  <div class="t hp" style="left:1146.54px;top:347.5px;color:#0000ee;text-decoration:underline;letter-spacing:0;transform-origin:0 0;transform:scaleX(1.0572)">Plus d'informations sur</div>
  <div class="t hp" style="left:1147.09px;top:362.5px;color:#0000ee;text-decoration:underline;letter-spacing:0;transform-origin:0 0;transform:scaleX(1.02)">cette page</div>
  <!-- page scrollbar -->
  <div class="abs" style="left:1321px;top:158px;width:15px;height:623px;background:#ece2cc;border-left:1px solid #d4c08f;border-right:1px solid #d4c08f"></div>
  <div class="abs" style="left:1321px;top:158px;width:15px;height:15px;background:linear-gradient(to right,#fffefc,#f6efe0);border:1px solid #b8a478;border-radius:3px 3px 0 0"></div>
  <svg style="left:1324.5px;top:163px" width="8" height="6" viewBox="0 0 8 6"><path d="M0.6 4.8 L4 1.4 L7.4 4.8" stroke="#222" stroke-width="1.4" fill="none"/></svg>
  <div class="abs" style="left:1321px;top:294px;width:15px;height:390px;background:linear-gradient(to right,#a8c8ee,#78a6da);border:1px solid #4a74b0"></div>
  <div class="abs" style="left:1325.5px;top:486px;width:6px;height:1px;background:#3f66a8;box-shadow:0 2px 0 #3f66a8,0 4px 0 #3f66a8"></div>
  <div class="abs" style="left:1321px;top:766px;width:15px;height:15px;background:linear-gradient(to right,#fffefc,#f6efe0);border:1px solid #b8a478;border-radius:0 0 3px 3px"></div>
  <svg style="left:1324.5px;top:771px" width="8" height="6" viewBox="0 0 8 6"><path d="M0.6 1.2 L4 4.6 L7.4 1.2" stroke="#222" stroke-width="1.4" fill="none"/></svg>

  <!-- STATUS BAR -->
  <div class="abs" style="left:3px;top:781px;width:1333px;height:25px;background:#faf7f0;border-top:1px solid #d9c194"></div>
  <div class="abs" style="left:3px;top:781px;width:1194px;height:25px;border:1px solid #d7c095;border-right:1.5px solid #d7c095;box-shadow:inset 1px 1px 0 rgba(255,255,255,0.7)"></div>
  <div class="abs" style="left:1197px;top:781px;width:118.6px;height:25px;border:1px solid #d7c095;border-left:none;border-right:1.5px solid #d7c095;box-shadow:inset 1px 1px 0 rgba(255,255,255,0.7)"></div>
  <div class="abs" style="left:1315.6px;top:781px;width:20.4px;height:25px;border:1px solid #d7c095;border-left:none;box-shadow:inset 1px 1px 0 rgba(255,255,255,0.7)"></div>
  <div class="t" style="left:11.86px;top:787px;font-size:13px;color:#111;letter-spacing:0;transform-origin:0 0;transform:scaleX(0.9714)">Terminé</div>
  <div class="t" style="left:1205.54px;top:787px;font-size:13px;color:#111;letter-spacing:0;transform-origin:0 0;transform:scaleX(1.0085)">localhost:9043</div>
  <svg style="left:1295px;top:785px" width="16" height="18" viewBox="0 0 16 18">
    <defs><linearGradient id="glk" x1="0" y1="0" x2="0" y2="1"><stop offset="0" stop-color="#f4f4f4"/><stop offset="1" stop-color="#b8b8b8"/></linearGradient></defs>
    <path d="M3.6 9 L3.6 6 C3.6 1.2 12.4 1.2 12.4 6 L12.4 9" fill="none" stroke="#9a9a9a" stroke-width="2.6"/>
    <path d="M3.6 9 L3.6 6 C3.6 1.2 12.4 1.2 12.4 6 L12.4 9" fill="none" stroke="#e6e6e6" stroke-width="1.2"/>
    <rect x="1.4" y="8" width="13.2" height="8.8" rx="1.6" fill="url(#glk)" stroke="#666" stroke-width="0.9"/>
    <rect x="1.6" y="8.2" width="12.8" height="3.8" rx="1" fill="#e8c818"/>
    <path d="M3 10.2 L6.6 10.2 M9.4 10.2 L13 10.2" stroke="#5a4a08" stroke-width="1.1"/>
    <path d="M2.6 13.4 L13.4 13.4 M2.6 15 L13.4 15" stroke="#9a9a9a" stroke-width="0.6"/>
  </svg>
  <svg style="left:1321px;top:791px" width="13" height="13" viewBox="0 0 13 13" fill="#dccfae">
    <rect x="10" y="1" width="1.2" height="1.2"/><rect x="7" y="4" width="1.2" height="1.2"/><rect x="10" y="4" width="1.2" height="1.2"/>
    <rect x="4" y="7" width="1.2" height="1.2"/><rect x="7" y="7" width="1.2" height="1.2"/><rect x="10" y="7" width="1.2" height="1.2"/>
    <rect x="1" y="10" width="1.2" height="1.2"/><rect x="4" y="10" width="1.2" height="1.2"/><rect x="7" y="10" width="1.2" height="1.2"/><rect x="10" y="10" width="1.2" height="1.2"/>
  </svg>

  <div id="hl"></div><div id="hr"></div><div class="abs" style="left:3px;top:121px;width:1333px;height:1px;background:rgba(255,255,255,0.8)"></div>
  <div id="bl"></div><div id="bl2"></div><div id="br"></div><div id="br2"></div><div id="bb"></div>
</div>
</body>
</html>
